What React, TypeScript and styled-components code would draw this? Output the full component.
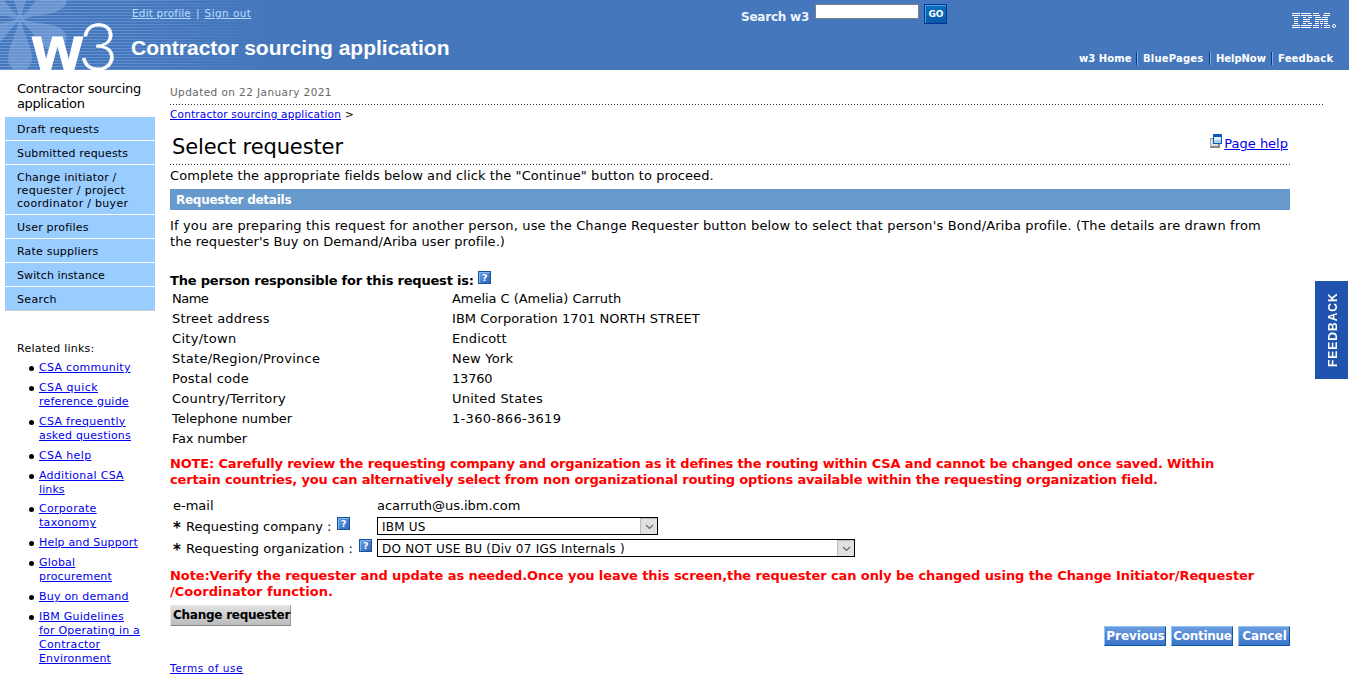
import React from "react";
import styled, { createGlobalStyle } from "styled-components";

const Global = createGlobalStyle`
  * { box-sizing: border-box; }
  body { margin: 0; background: #fff; color: #000; font: 13px/16px "DejaVu Sans", Verdana, sans-serif; overflow: hidden; }
  a { color: #0000ee; text-decoration: underline; }
  svg { flex: none; }
`;

const Page = styled.div`height: 690px; overflow: hidden;`;

/* Text with its own tracking, kept on one line */
const Text = styled.span<{ $ls?: number }>`
  letter-spacing: ${(p) => p.$ls ?? 0}px;
  white-space: nowrap;
`;
const Line = styled(Text)`display: block;`;

/* ---------- masthead ---------- */
const Masthead = styled.header`
  display: flex;
  height: 70px;
  background: #4477bc;
  color: #fff;
  position: relative;
`;
const Pattern = styled.svg`position: absolute; left: 0; top: 0; overflow: visible;`;
const Titles = styled.div`
  position: relative;
  width: 741px;
  padding: 5px 0 0 131px;
`;
const UserLinks = styled.div`
  display: flex;
  gap: 5px;
  padding-left: 1px;
  font-size: 10.5px;
  line-height: 16px;
  color: #b5dcff;
  a { color: #b5dcff; }
`;
const AppTitle = styled.div`
  margin-top: 14px;
  font: bold 21px/26px "Liberation Sans", Arial, sans-serif;
`;
const SearchForm = styled.form`
  display: flex;
  align-items: flex-start;
  width: 230px;
  padding-top: 4px;
`;
const SearchLabel = styled.label`
  width: 74px;
  padding-top: 5px;
  font-size: 12px;
  font-weight: bold;
  color: #eef4fc;
`;
const SearchInput = styled.input`
  width: 104px;
  height: 15px;
  border: 1px solid #808080;
  padding: 0;
  background: #fff;
`;
const GoButton = styled.button`
  width: 23px;
  height: 20px;
  margin-left: 5px;
  padding: 0 0 0 1px;
  border: 1px solid #00339a;
  box-shadow: inset 1px 1px 0 #4aa0e0;
  background: linear-gradient(#0a70bb, #0a5aa8);
  color: #fff;
  font: bold 9px/18px "DejaVu Sans", sans-serif;
`;
const MastRight = styled.div`
  margin-left: auto;
  display: flex;
  flex-direction: column;
  align-items: flex-end;
  padding: 13px 13px 0 0;
`;
const MastNav = styled.nav`
  display: flex;
  margin: 24px 2px 0 0;
  font-size: 10px;
  font-weight: bold;
  line-height: 13px;
`;
const NavItem = styled.span<{ $w: number }>`
  width: ${(p) => p.$w}px;
  & + & { border-left: 1px solid #003f7f; box-shadow: inset 1px 0 0 #86a9e8; padding-left: 6px; }
`;

const navItems = [
  { label: "w3 Home", w: 57, ls: 0.05 },
  { label: "BluePages", w: 73, ls: 0.2 },
  { label: "HelpNow", w: 62, ls: -0.05 },
  { label: "Feedback", w: 63, ls: 0.2 },
];

const petals = [0, 1, 2, 3, 4, 5].map((i) => i * 60);

function MastPattern() {
  return (
    <Pattern width="270" height="70" viewBox="0 0 270 70">
      <defs>
        <linearGradient id="fade" x1="0" x2="1">
          <stop offset="0" stopColor="#8bb0e4" stopOpacity="0.6" />
          <stop offset="0.5" stopColor="#8bb0e4" stopOpacity="0.4" />
          <stop offset="1" stopColor="#8bb0e4" stopOpacity="0" />
        </linearGradient>
        <pattern id="rules" width="10" height="3" patternUnits="userSpaceOnUse">
          <rect width="10" height="1" fill="#fff" />
        </pattern>
        <mask id="ruled"><rect width="270" height="70" fill="url(#rules)" /></mask>
        <clipPath id="band"><rect width="270" height="70" /></clipPath>
      </defs>
      <g fill="#9dbdea" fillOpacity="0.42" clipPath="url(#band)">
        {petals.map((a) => (
          <path key={a} transform={`translate(20 19) rotate(${a})`} d="M-1.500 1 C-2 14 -12 27 -12 39 C-12 48 -7 51.500 0 51.500 C7 51.500 12 48 12 39 C12 27 2 14 1.500 1Z" />
        ))}
      </g>
      <rect width="270" height="70" fill="url(#fade)" mask="url(#ruled)" />
      <text x="32.500" y="70" fontFamily="Liberation Sans" fontWeight="700" fontSize="63" fill="#fff" stroke="#fff" strokeWidth="1.200" textLength="50" lengthAdjust="spacingAndGlyphs">w</text>
      <text x="78.500" y="69.500" fontFamily="Lato" fontWeight="300" fontSize="66" fill="#fff" stroke="#fff" strokeWidth="0.400" textLength="39.500" lengthAdjust="spacingAndGlyphs">3</text>
    </Pattern>
  );
}

/* eight-bar logo: [x, width] segments for each bar */
const bars: number[][][] = [
  [[0, 8], [9, 10], [21, 6], [32, 6]],
  [[0, 8], [9, 11], [21, 7], [31, 7]],
  [[2, 4], [11, 3], [16, 4], [23, 6], [30, 6]],
  [[2, 4], [11, 7], [23, 13]],
  [[2, 4], [11, 7], [23, 4], [28, 3], [32, 4]],
  [[2, 4], [11, 3], [16, 4], [23, 4], [28, 3], [32, 4]],
  [[0, 8], [9, 11], [21, 6], [29, 1], [32, 6]],
  [[0, 8], [9, 10], [21, 6], [29, 1], [32, 6]],
];
function CompanyLogo() {
  return (
    <svg width="44" height="15" viewBox="0 0 44 15" fill="#fff" shapeRendering="crispEdges">
      {bars.map((row, y) => row.map(([x, w]) => <rect key={`${x}-${y}`} x={x} y={y * 2} width={w} height="1" />))}
      <circle cx="42" cy="13" r="1.500" fill="none" stroke="#fff" shapeRendering="auto" />
    </svg>
  );
}

/* ---------- sidebar ---------- */
const Body = styled.div`display: flex;`;
const Sidebar = styled.aside`width: 170px; padding-left: 5px; font-size: 11px;`;
const SideTitle = styled.div`
  height: 47px;
  padding: 11px 0 0 12px;
  font-size: 13px;
  line-height: 15px;
`;
const Menu = styled.ul`
  list-style: none;
  width: 150px;
  margin: 0;
  padding: 0;
  border-bottom: 1px solid #ccc;
`;
const MenuItem = styled.li`
  padding: 6px 0 4px 12px;
  background: #99ccff;
  line-height: 13px;
  & + & { border-top: 1px solid #fff; }
`;
const RelatedTitle = styled.div`margin: 31px 0 5px; padding-left: 12px; line-height: 14px;`;
const LinkList = styled.ul`
  margin: 0;
  padding: 0 0 0 34px;
  list-style: none;
  line-height: 14px;
`;
const LinkItem = styled.li`
  position: relative;
  margin-bottom: 5.900px;
  &::before {
    content: "";
    position: absolute;
    left: -10px;
    top: 5px;
    width: 5px;
    height: 5px;
    border-radius: 50%;
    background: #000;
  }
`;

const menu: [string, number][][] = [
  [["Draft requests", 0.24]],
  [["Submitted requests", 0.17]],
  [["Change initiator /", 0.22], ["requester / project", 0.32], ["coordinator / buyer", 0.3]],
  [["User profiles", 0.2]],
  [["Rate suppliers", 0.2]],
  [["Switch instance", 0.1]],
  [["Search", 0.35]],
];
const related: [string, number][][] = [
  [["CSA community", 0.29]],
  [["CSA quick", 0.4], ["reference guide", 0.2]],
  [["CSA frequently", 0.3], ["asked questions", 0.2]],
  [["CSA help", 0.35]],
  [["Additional CSA", 0.27], ["links", 0.1]],
  [["Corporate", 0.3], ["taxonomy", 0.3]],
  [["Help and Support", 0.17]],
  [["Global", 0.2], ["procurement", 0.2]],
  [["Buy on demand", 0.22]],
  [["IBM Guidelines", 0.24], ["for Operating in a", 0.2], ["Contractor", 0.28], ["Environment", 0.17]],
];

/* ---------- main column ---------- */
const Main = styled.main`width: 1179px; padding-top: 15px;`;
const Updated = styled.div`
  width: 1154px;
  height: 20px;
  font-size: 10.5px;
  line-height: 15px;
  color: #666;
  background: repeating-linear-gradient(90deg, #333 0 1px, transparent 1px 3px) 0 100% / 100% 1px no-repeat;
`;
const Crumbs = styled.div`display: flex; gap: 4px; height: 23px; font-size: 10.5px; line-height: 19px;`;
const Content = styled.div`width: 1120px;`;
const HeadingRow = styled.div`
  display: flex;
  justify-content: space-between;
  height: 37px;
  padding: 4px 2px 0;
  background: repeating-linear-gradient(90deg, #333 0 1px, transparent 1px 3px) 0 100% / 100% 1px no-repeat;
`;
const Heading = styled.h1`margin: 0; font-size: 21px; font-weight: normal; line-height: 30px;`;
const HelpLink = styled.div`
  display: flex;
  align-items: flex-start;
  padding-top: 2px;
  svg { margin: 0 1px 0 0; }
  a { margin-top: 1px; line-height: 17px; }
`;
const Intro = styled.div`padding-top: 3px; height: 24px;`;
const SectionBar = styled.h2`
  height: 21px;
  margin: 0;
  padding-left: 6px;
  background: #6699cc;
  color: #fff;
  font-size: 12px;
  line-height: 23px;
`;
const Para = styled.p`margin: 8px 0 0; height: 53px;`;
const Responsible = styled.div`
  display: flex;
  gap: 4px;
  height: 18px;
  font-weight: bold;
  line-height: 20px;
`;
const Details = styled.dl`
  display: grid;
  grid-template-columns: 280px auto;
  grid-auto-rows: 20px;
  margin: 0;
  padding: 1px 0 0 2px;
  line-height: 18px;
  dd { margin: 0; }
`;
const Warning = styled.p<{ $top: number; $h: number }>`
  margin: ${(p) => p.$top}px 0 0;
  height: ${(p) => p.$h}px;
  color: #f00;
  font-weight: bold;
`;
const FieldRow = styled.div<{ $h: number }>`
  display: flex;
  height: ${(p) => p.$h}px;
  padding-left: 3px;
  line-height: 20px;
`;
const FieldLabel = styled.div`
  display: flex;
  width: 204px;
  svg { margin-left: 6px; }
`;
const Star = styled.b`width: 13px; padding-top: 1px; font-size: 15px;`;
const Select = styled.div<{ $w: number }>`
  display: flex;
  justify-content: space-between;
  width: ${(p) => p.$w}px;
  height: 18px;
  border: 1px solid #000;
  padding-left: 4px;
  font-size: 12px;
  line-height: 18px;
`;
const Arrow = styled.span`
  display: flex;
  align-items: center;
  justify-content: center;
  width: 17px;
  height: 16px;
  border: 1px solid #bbb;
  border-width: 1px 0 0 1px;
  background: #e1e1e1;
`;
const GrayButton = styled.button`
  display: block;
  width: 121px;
  height: 21px;
  padding: 0 0 1px 2px;
  border: 1px solid #e8e8e8;
  border-right-color: #999;
  border-bottom-color: #888;
  background: linear-gradient(#e0e0e0, #bcbcbc);
  color: #000;
  font: bold 12px/18px "DejaVu Sans", Verdana, sans-serif;
  white-space: nowrap;
`;
const Actions = styled.div`display: flex; justify-content: flex-end; gap: 5px;`;
const BlueButton = styled.button<{ $w: number }>`
  width: ${(p) => p.$w}px;
  height: 20px;
  padding: 0 0 0 1px;
  border: 1px solid #8fc4f8;
  border-right-color: #0f55a5;
  border-bottom-color: #0f55a5;
  background: linear-gradient(#6a9ce0, #3b74c8);
  color: #fff;
  font: bold 12px/18px "DejaVu Sans", Verdana, sans-serif;
`;
const Terms = styled.div`padding-top: 15px; font-size: 10.5px; line-height: 15px;`;
const FeedbackTab = styled.div`
  position: absolute;
  left: 1315px;
  top: 281px;
  display: flex;
  align-items: center;
  justify-content: center;
  width: 33px;
  height: 98px;
  padding-right: 2px;
  background: #2053ad;
  color: #fff;
  font: bold 12px/14px "Liberation Sans", Arial, sans-serif;
  letter-spacing: 1px;
  writing-mode: vertical-rl;
  transform: rotate(180deg);
`;

const HelpMark = () => (
  <svg width="13" height="13" viewBox="0 0 13 13">
    <defs>
      <linearGradient id="hm" x1="0" y1="0" x2="1" y2="1"><stop stopColor="#6aa3e6" /><stop offset="1" stopColor="#2b62bd" /></linearGradient>
    </defs>
    <rect x="0.500" y="0.500" width="12" height="12" fill="url(#hm)" stroke="#1a4f9c" />
    <path d="M1.500 12V1.500H12" fill="none" stroke="#7fb8f0" />
    <text x="6.800" y="10" textAnchor="middle" fontFamily="DejaVu Sans" fontWeight="700" fontSize="9.500" fill="#fff">?</text>
  </svg>
);
const WindowIcon = () => (
  <svg width="13" height="14" viewBox="0 0 13 14" shapeRendering="crispEdges">
    <rect x="0" y="4" width="10" height="10" fill="#888" />
    <rect x="1" y="5" width="7" height="7" fill="#ddd" />
    <rect x="0" y="4" width="1" height="9" fill="#aaa" />
    <rect x="3" y="0" width="9" height="10" fill="#0a5bb5" />
    <rect x="4" y="3" width="7" height="6" fill="#e2f1fd" />
    <rect x="4" y="6" width="7" height="3" fill="#a8d0f5" />
  </svg>
);
const Chevron = () => (
  <svg width="9" height="6" viewBox="0 0 9 6" fill="none" stroke="#666" strokeWidth="1.200"><path d="M1 1L4.500 4.500L8 1" /></svg>
);

const details: [string, number, string, number][] = [
  ["Name", -0.5, "Amelia C (Amelia) Carruth", -0.04],
  ["Street address", 0.22, "IBM Corporation 1701 NORTH STREET", 0.06],
  ["City/town", 0.3, "Endicott", 0.15],
  ["State/Region/Province", 0.25, "New York", 0.2],
  ["Postal code", 0.25, "13760", -0.2],
  ["Country/Territory", 0.24, "United States", 0.22],
  ["Telephone number", -0.05, "1-360-866-3619", 0.3],
  ["Fax number", -0.2, "", 0],
];

export default function App() {
  return (
    <Page>
      <Global />
      <Masthead>
        <MastPattern />
        <Titles>
          <UserLinks>
            <a href="#"><Text $ls={0.18}>Edit profile</Text></a>
            <span>|</span>
            <a href="#"><Text $ls={0.42}>Sign out</Text></a>
          </UserLinks>
          <AppTitle><Text>Contractor sourcing application</Text></AppTitle>
        </Titles>
        <SearchForm>
          <SearchLabel><Text $ls={-0.23}>Search w3</Text></SearchLabel>
          <SearchInput />
          <GoButton type="button">GO</GoButton>
        </SearchForm>
        <MastRight>
          <CompanyLogo />
          <MastNav>
            {navItems.map((n) => <NavItem key={n.label} $w={n.w}><Text $ls={n.ls}>{n.label}</Text></NavItem>)}
          </MastNav>
        </MastRight>
      </Masthead>
      <Body>
        <Sidebar>
          <SideTitle>
            <Line $ls={-0.24}>Contractor sourcing</Line>
            <Line $ls={-0.38}>application</Line>
          </SideTitle>
          <Menu>
            {menu.map((m) => (
              <MenuItem key={m[0][0]}>{m.map(([t, ls]) => <Line key={t} $ls={ls}>{t}</Line>)}</MenuItem>
            ))}
          </Menu>
          <RelatedTitle><Text $ls={0.24}>Related links:</Text></RelatedTitle>
          <LinkList>
            {related.map((m) => (
              <LinkItem key={m[0][0]}>
                <a href="#">{m.map(([t, ls]) => <Text key={t} $ls={ls}>{t}{t !== m[m.length - 1][0] && <br />}</Text>)}</a>
              </LinkItem>
            ))}
          </LinkList>
        </Sidebar>
        <Main>
          <Updated><Text $ls={0.42}>Updated on 22 January 2021</Text></Updated>
          <Crumbs><a href="#"><Text $ls={0.19}>Contractor sourcing application</Text></a><span>&gt;</span></Crumbs>
          <Content>
            <HeadingRow>
              <Heading><Text $ls={-0.12}>Select requester</Text></Heading>
              <HelpLink><WindowIcon /><a href="#">Page help</a></HelpLink>
            </HeadingRow>
            <Intro><Text $ls={0.09}>Complete the appropriate fields below and click the "Continue" button to proceed.</Text></Intro>
            <SectionBar><Text $ls={-0.26}>Requester details</Text></SectionBar>
            <Para>
              <Line $ls={0.153}>If you are preparing this request for another person, use the Change Requester button below to select that person's Bond/Ariba profile. (The details are drawn from</Line>
              <Line $ls={0.05}>the requester's Buy on Demand/Ariba user profile.)</Line>
            </Para>
            <Responsible><Text $ls={-0.2}>The person responsible for this request is:</Text><HelpMark /></Responsible>
            <Details>
              {details.map(([k, kl, v, vl]) => (
                <React.Fragment key={k}>
                  <dt><Text $ls={kl}>{k}</Text></dt>
                  <dd><Text $ls={vl}>{v}</Text></dd>
                </React.Fragment>
              ))}
            </Details>
            <Warning $top={6} $h={40}>
              <Line $ls={-0.165}>NOTE: Carefully review the requesting company and organization as it defines the routing within CSA and cannot be changed once saved. Within</Line>
              <Line $ls={-0.155}>certain countries, you can alternatively select from non organizational routing options available within the requesting organization field.</Line>
            </Warning>
            <FieldRow $h={21}>
              <FieldLabel><Text>e-mail</Text></FieldLabel>
              <Text $ls={-0.02}>acarruth@us.ibm.com</Text>
            </FieldRow>
            <FieldRow $h={22}>
              <FieldLabel><Star>*</Star><Text>Requesting company :</Text><HelpMark /></FieldLabel>
              <Select $w={281}><Text $ls={0.2}>IBM US</Text><Arrow><Chevron /></Arrow></Select>
            </FieldRow>
            <FieldRow $h={22}>
              <FieldLabel><Star>*</Star><Text $ls={0.02}>Requesting organization :</Text><HelpMark /></FieldLabel>
              <Select $w={478}><Text $ls={0.26}>DO NOT USE BU (Div 07 IGS Internals )</Text><Arrow><Chevron /></Arrow></Select>
            </FieldRow>
            <Warning $top={7} $h={37}>
              <Line $ls={-0.087}>Note:Verify the requester and update as needed.Once you leave this screen,the requester can only be changed using the Change Initiator/Requester</Line>
              <Line $ls={0.04}>/Coordinator function.</Line>
            </Warning>
            <GrayButton><Text $ls={-0.25}>Change requester</Text></GrayButton>
            <Actions>
              <BlueButton $w={62}><Text $ls={-0.05}>Previous</Text></BlueButton>
              <BlueButton $w={62}><Text $ls={-0.28}>Continue</Text></BlueButton>
              <BlueButton $w={52}><Text $ls={-0.05}>Cancel</Text></BlueButton>
            </Actions>
            <Terms><a href="#"><Text $ls={0.57}>Terms of use</Text></a></Terms>
          </Content>
        </Main>
      </Body>
      <FeedbackTab>FEEDBACK</FeedbackTab>
    </Page>
  );
}
